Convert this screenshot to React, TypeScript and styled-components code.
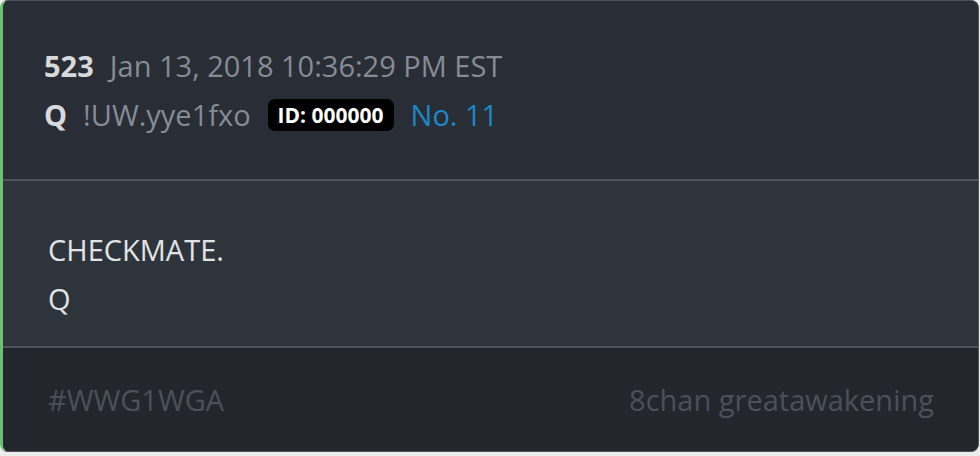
import React from "react";
import styled, { createGlobalStyle } from "styled-components";

const Global = createGlobalStyle`
  html, body {
    margin: 0;
    padding: 0;
    background: #ececec;
  }
  * { box-sizing: border-box; }
`;

const Card = styled.div`
  width: 979px;
  height: 452px;
  display: flex;
  flex-direction: column;
  background: #23262c;
  border: 1px solid #4d5259;
  border-left: 3px solid #6cc070;
  border-radius: 8px;
  overflow: hidden;
  font-family: "Open Sans", "DejaVu Sans", sans-serif;
`;

const Header = styled.div`
  height: 178px;
  background: #292d35;
  padding: 41px 0 0 41px;
  display: flex;
  flex-direction: column;
  gap: 2px;
`;

const MetaRow = styled.div`
  display: flex;
  align-items: center;
  height: 47px;
  line-height: 47px;
  font-size: 29px;
  white-space: nowrap;
`;

const Strong = styled.span`
  font-weight: 700;
  color: #d8d9db;
  margin-right: 16px;
`;

const Muted = styled.span`
  color: #868b96;
`;

const Badge = styled.span`
  display: inline-flex;
  align-items: center;
  height: 32px;
  padding: 0 10px;
  margin: 0 17px 0 17px;
  background: #000;
  border-radius: 7px;
  color: #fff;
  font-weight: 700;
  font-size: 21px;
  line-height: 32px;
`;

const PostNo = styled.span`
  color: #1c88c8;
`;

const Divider = styled.div`
  height: 2px;
  background: #4f545b;
`;

const Body = styled.div`
  height: 165px;
  background: #2e343b;
  padding: 44px 0 0 45px;
  color: #e2e3e4;
  font-size: 29px;
  line-height: 49px;
`;

const Footer = styled.div`
  flex: 1;
  background: #23262c;
  display: flex;
  justify-content: space-between;
  align-items: flex-start;
  padding: 32px 44px 0 45px;
  font-size: 29px;
  color: #4b505a;
`;

export default function App() {
  return (
    <>
      <Global />
      <Card>
        <Header>
          <MetaRow>
            <Strong>523</Strong>
            <Muted>Jan 13, 2018 10:36:29 PM EST</Muted>
          </MetaRow>
          <MetaRow>
            <Strong>Q</Strong>
            <Muted>!UW.yye1fxo</Muted>
            <Badge>ID: 000000</Badge>
            <PostNo>No. 11</PostNo>
          </MetaRow>
        </Header>
        <Divider />
        <Body>
          <div>CHECKMATE.</div>
          <div>Q</div>
        </Body>
        <Divider />
        <Footer>
          <span>#WWG1WGA</span>
          <span>8chan greatawakening</span>
        </Footer>
      </Card>
    </>
  );
}
